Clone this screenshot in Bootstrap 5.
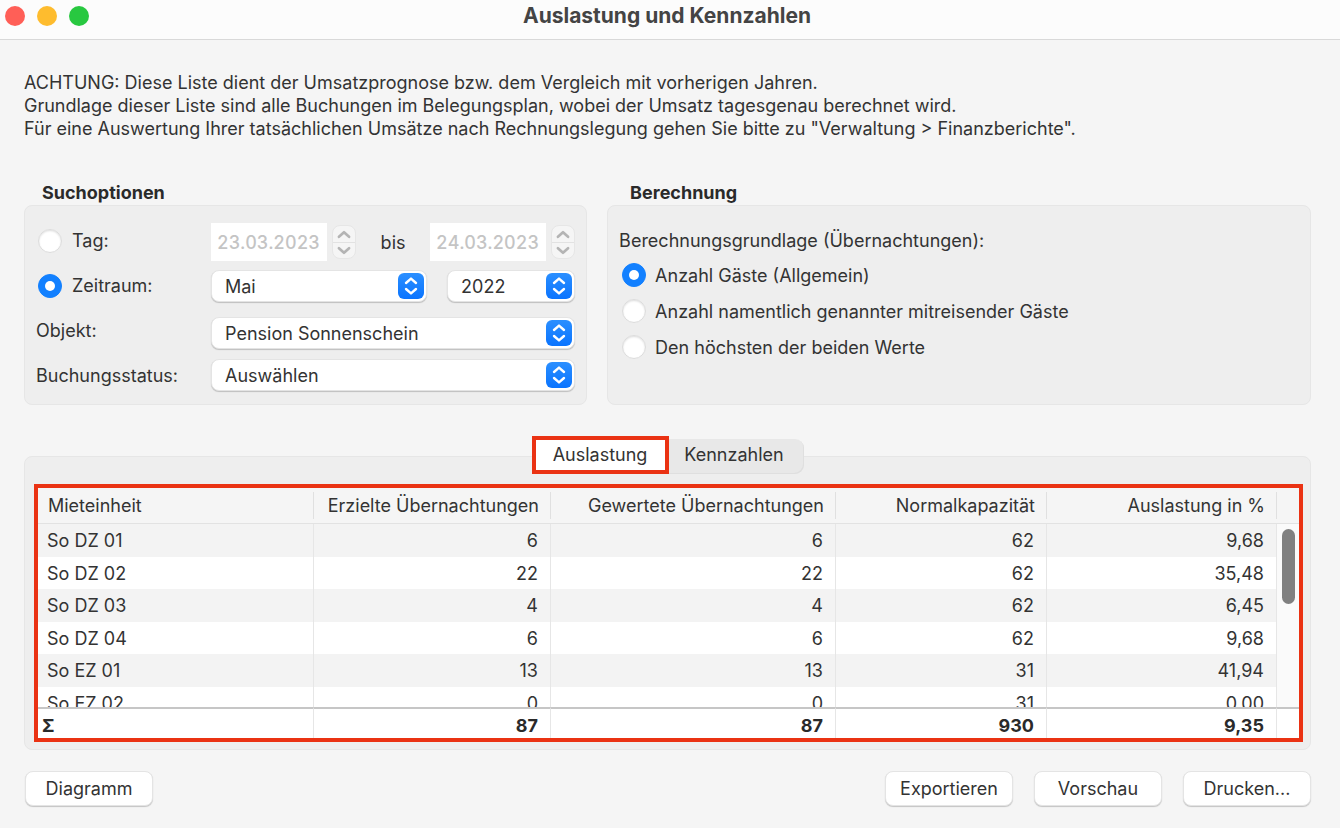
<!DOCTYPE html>
<html lang="de">
<head>
<meta charset="utf-8">
<meta name="viewport" content="width=device-width, initial-scale=1">
<title>Auslastung und Kennzahlen</title>
<link href="https://cdn.jsdelivr.net/npm/bootstrap@5.3.0/dist/css/bootstrap.min.css" rel="stylesheet">
<style>
  body { font-family: Inter, "Liberation Sans", sans-serif; font-size: 18px; line-height: 23px; color: #333; background: #f5f5f5; }
  .titlebar { height: 40px; background: #fcfcfc; border-bottom: 1px solid #d9d9d9; }
  .titlebar h1 { font-size: 21px; line-height: 32px; font-weight: 700; color: #444; padding-right: 6px; }
  .lights { left: 5px; top: 6px; gap: 12px; }
  .light { width: 20px; height: 20px; }
  .light-close { background: #ff5f57; }
  .light-min { background: #febc2e; }
  .light-max { background: #28c840; }
  .content { padding: 31px 29px 22px 24px; }
  .options { display: grid; grid-template-columns: 4fr 5fr; gap: 20px; margin-top: 41px; }
  .options legend { float: none; font-size: 18px; line-height: 24px; font-weight: 700; color: #2a2a2a; padding: 0 18px; margin: 0; }
  .options fieldset + fieldset legend { padding-left: 23px; }
  .groupbox { background: #eee; border: 1px solid #e6e6e6; border-radius: 8px; }
  .searchbox { height: 200px; padding: 12px 11px; }
  .calcbox { height: 200px; padding: 23px 11px; }
  .labels { width: 175px; }
  .labels > * { height: 45px; }
  .labels .choice { padding-left: 2px; }
  .labels .choice label { padding-left: 10px; }
  .fields { padding-top: 5px; }
  .bases { gap: 12px; margin-top: 11px; padding-left: 3px; }
  .bases label { padding-left: 9px; }
  .form-check-input.dot { width: 24px; height: 24px; margin: 0; border: 1px solid #dcdcdc; background-color: #fff; box-shadow: inset 0 1px 2px #0002; }
  .form-check-input.dot:checked { background-color: #1280ff; border-color: #1280ff; box-shadow: none; background-size: 20px; background-position: center; }
  .date { width: 116px; height: 38px; padding: 0 6px; border: 0; background: #fff; color: #c4c4c4; font-variant-numeric: tabular-nums; font-weight: 500; }
  .stepper { width: 24px; height: 34px; margin-left: 5px; border-radius: 8px; border: 1px solid #e6e6e6; background: #f5f5f5; overflow: hidden; }
  .stepper button { border: 0; padding: 0; background: none; color: #b4b4b4; height: 16px; }
  .stepper button + button { border-top: 1px solid #e2e2e2; }
  .stepper svg, .picker svg { display: block; fill: none; stroke: currentColor; stroke-linecap: round; stroke-linejoin: round; }
  .picker select { height: 32px; padding: 0 34px 0 13px; border: 1px solid #e4e4e4; border-radius: 8px; background: #fff; color: #333; box-shadow: 0 1px 1px #0003; appearance: none; }
  .picker svg { position: absolute; right: 3px; top: 3px; width: 26px; height: 26px; border-radius: 6px; background: linear-gradient(#2b8fff, #0a74ff); color: #fff; pointer-events: none; }
  .month { width: 216px; }
  .year { width: 128px; }
  .period { margin: 9px 0 15px; }
  .state { margin-top: 10px; }
  .tabs { margin-top: 31px; }
  .tabs button { border: 0; color: #333; }
  .tabs .tab-on { width: 137px; height: 38px; padding: 0 0 2px; background: #fff; outline: 4px solid #ea3213; outline-offset: -4px; }
  .tabs .tab-off { width: 135px; height: 35px; padding: 0 4px 4px 0; margin-top: 3px; background: #e8e8e8; border-radius: 0 9px 9px 0; box-shadow: inset -1px -1px 0 #dfdfdf; }
  .tabpanel { margin-top: -18px; padding: 27px 7px 7px 9px; }
  .marked { border: 4px solid #ea3213; background: #fff; }
  .scrollbox { height: 250px; overflow: hidden; }
  .units { table-layout: fixed; border-collapse: separate; border-spacing: 0; }
  .units th, .units td { padding: 0 12px 0 9px; height: 32px; text-align: right; border-right: 1px solid #e6e6e6; }
  .units th:first-child, .units td:first-child { text-align: left; }
  .units th:last-child, .units td:last-child { border-right: 0; padding: 0; }
  .units thead th { position: sticky; top: 0; height: 36px; font-weight: 400; background: linear-gradient(#e0e0e0, #e0e0e0) right center / 1px 27px no-repeat #f5f5f5; border-right: 0; border-bottom: 1px solid #e2e2e2; padding: 0 12px 0 10px; }
  .units thead th:last-child { background: #f5f5f5; }
  .units tbody tr:nth-child(odd) td { height: 33px; background: #f3f3f3; }
  .units tbody tr:nth-child(even) td { background: #fff; }
  .units tbody tr td:last-child { background: #fafafa; }
  .units tfoot td, .units tfoot th { position: sticky; bottom: 0; height: 31px; padding-top: 4px; font-weight: 700; color: #2a2a2a; background: #fff; border-top: 2px solid #c6c6c6; }
  .units tfoot th:first-child { padding-left: 4px; }
  .thumb { right: 4px; top: 41px; width: 13px; height: 75px; border-radius: 7px; background: #808080; }
  .actions { gap: 21px; margin-top: 21px; padding-left: 1px; }
  .push { width: 128px; height: 35px; padding: 0; border: 1px solid #e4e4e4; border-radius: 8px; background: #fff; color: #333; font-size: 18px; box-shadow: 0 1px 1px #0003; }
</style>
</head>
<body>
<svg class="d-none" aria-hidden="true">
  <symbol id="updown" viewBox="0 0 26 26"><path d="M8 10 13 5.600l5 4.400M8 16l5 4.400 5-4.400" stroke-width="2.4"/></symbol>
  <symbol id="up" viewBox="0 0 12 8"><path d="M1.500 6 6 2l4.500 4" stroke-width="2.400"/></symbol>
  <symbol id="down" viewBox="0 0 12 8"><path d="M1.500 2 6 6l4.500-4" stroke-width="2.400"/></symbol>
</svg>

<header class="titlebar position-relative text-center">
  <div class="lights position-absolute d-flex">
    <span class="light light-close rounded-circle"></span>
    <span class="light light-min rounded-circle"></span>
    <span class="light light-max rounded-circle"></span>
  </div>
  <h1 class="m-0">Auslastung und Kennzahlen</h1>
</header>

<main class="content">
  <p class="m-0">ACHTUNG: Diese Liste dient der Umsatzprognose bzw. dem Vergleich mit vorherigen Jahren.<br>
  Grundlage dieser Liste sind alle Buchungen im Belegungsplan, wobei der Umsatz tagesgenau berechnet wird.<br>
  Für eine Auswertung Ihrer tatsächlichen Umsätze nach Rechnungslegung gehen Sie bitte zu "Verwaltung &gt; Finanzberichte".</p>

  <form class="options">
    <fieldset>
      <legend>Suchoptionen</legend>
      <div class="groupbox searchbox d-flex">
        <div class="labels flex-shrink-0">
          <div class="choice d-flex align-items-center"><input class="form-check-input dot" type="radio" name="range" id="rDay"><label for="rDay">Tag:</label></div>
          <div class="choice d-flex align-items-center"><input class="form-check-input dot" type="radio" name="range" id="rPeriod" checked><label for="rPeriod">Zeitraum:</label></div>
          <div class="d-flex align-items-center"><label for="object">Objekt:</label></div>
          <div class="d-flex align-items-center"><label for="status">Buchungsstatus:</label></div>
        </div>
        <div class="fields flex-grow-1">
          <div class="d-flex align-items-center justify-content-between">
            <div class="d-flex align-items-center">
              <input class="date" type="text" value="23.03.2023" aria-label="Von" disabled>
              <div class="stepper d-flex flex-column">
                <button type="button" class="d-flex align-items-center justify-content-center" aria-label="Von später" disabled><svg width="14" height="9"><use href="#up"/></svg></button>
                <button type="button" class="d-flex align-items-center justify-content-center" aria-label="Von früher" disabled><svg width="14" height="9"><use href="#down"/></svg></button>
              </div>
            </div>
            <span>bis</span>
            <div class="d-flex align-items-center">
              <input class="date" type="text" value="24.03.2023" aria-label="Bis" disabled>
              <div class="stepper d-flex flex-column">
                <button type="button" class="d-flex align-items-center justify-content-center" aria-label="Bis später" disabled><svg width="14" height="9"><use href="#up"/></svg></button>
                <button type="button" class="d-flex align-items-center justify-content-center" aria-label="Bis früher" disabled><svg width="14" height="9"><use href="#down"/></svg></button>
              </div>
            </div>
          </div>
          <div class="period d-flex justify-content-between">
            <div class="picker month position-relative"><select class="w-100" aria-label="Monat"><option>Mai</option></select><svg><use href="#updown"/></svg></div>
            <div class="picker year position-relative"><select class="w-100" aria-label="Jahr"><option>2022</option></select><svg><use href="#updown"/></svg></div>
          </div>
          <div class="picker position-relative"><select class="w-100" id="object"><option>Pension Sonnenschein</option></select><svg><use href="#updown"/></svg></div>
          <div class="picker state position-relative"><select class="w-100" id="status"><option>Auswählen</option></select><svg><use href="#updown"/></svg></div>
        </div>
      </div>
    </fieldset>
    <fieldset>
      <legend>Berechnung</legend>
      <div class="groupbox calcbox">
        <p class="m-0">Berechnungsgrundlage (Übernachtungen):</p>
        <div class="bases d-grid">
          <div class="d-flex align-items-center"><input class="form-check-input dot" type="radio" name="basis" id="b1" checked><label for="b1">Anzahl Gäste (Allgemein)</label></div>
          <div class="d-flex align-items-center"><input class="form-check-input dot" type="radio" name="basis" id="b2"><label for="b2">Anzahl namentlich genannter mitreisender Gäste</label></div>
          <div class="d-flex align-items-center"><input class="form-check-input dot" type="radio" name="basis" id="b3"><label for="b3">Den höchsten der beiden Werte</label></div>
        </div>
      </div>
    </fieldset>
  </form>

  <div class="tabs d-flex justify-content-center position-relative z-1" role="tablist">
    <button type="button" class="tab-on" role="tab" aria-selected="true">Auslastung</button>
    <button type="button" class="tab-off" role="tab" aria-selected="false">Kennzahlen</button>
  </div>
  <section class="groupbox tabpanel">
    <div class="marked position-relative">
      <div class="scrollbox">
        <table class="units w-100">
          <colgroup><col><col style="width:237px"><col style="width:285px"><col style="width:211px"><col style="width:230px"><col style="width:22px"></colgroup>
          <thead><tr><th>Mieteinheit</th><th>Erzielte Übernachtungen</th><th>Gewertete Übernachtungen</th><th>Normalkapazität</th><th>Auslastung in %</th><th></th></tr></thead>
          <tbody>
            <tr><td>So DZ 01</td><td>6</td><td>6</td><td>62</td><td>9,68</td><td></td></tr>
            <tr><td>So DZ 02</td><td>22</td><td>22</td><td>62</td><td>35,48</td><td></td></tr>
            <tr><td>So DZ 03</td><td>4</td><td>4</td><td>62</td><td>6,45</td><td></td></tr>
            <tr><td>So DZ 04</td><td>6</td><td>6</td><td>62</td><td>9,68</td><td></td></tr>
            <tr><td>So EZ 01</td><td>13</td><td>13</td><td>31</td><td>41,94</td><td></td></tr>
            <tr><td>So EZ 02</td><td>0</td><td>0</td><td>31</td><td>0,00</td><td></td></tr>
          </tbody>
          <tfoot><tr><th>Σ</th><td>87</td><td>87</td><td>930</td><td>9,35</td><td></td></tr></tfoot>
        </table>
      </div>
      <div class="thumb position-absolute"></div>
    </div>
  </section>

  <div class="actions d-flex">
    <button type="button" class="push me-auto">Diagramm</button>
    <button type="button" class="push">Exportieren</button>
    <button type="button" class="push">Vorschau</button>
    <button type="button" class="push">Drucken...</button>
  </div>
</main>
<script src="https://cdn.jsdelivr.net/npm/bootstrap@5.3.0/dist/js/bootstrap.bundle.min.js"></script>
</body>
</html>
